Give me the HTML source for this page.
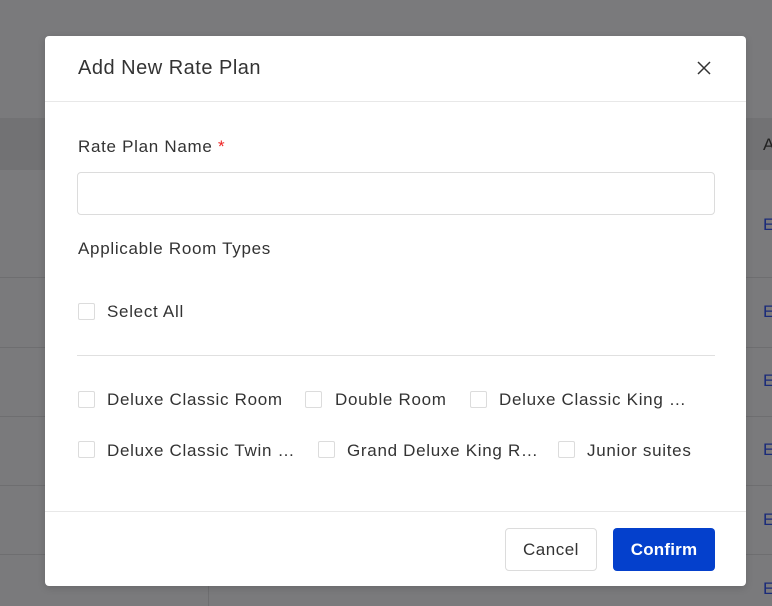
<!DOCTYPE html>
<html><head><meta charset="utf-8"><style>
*{box-sizing:border-box;margin:0;padding:0}
body{width:772px;height:606px;overflow:hidden;background:#7a7a7c;font-family:"Liberation Sans",Arial,sans-serif;position:relative;color:#333}
.band{position:absolute;left:0;right:0;top:118px;height:52px;background:#727274}
.hl{position:absolute;left:0;right:0;height:1px;background:#6e6e70}
.E{position:absolute;left:763px;color:#1a2b7a;font-size:17px}
.modal{position:absolute;left:45px;top:36px;width:701px;height:550px;background:#fff;border-radius:4px;box-shadow:0 2px 8px rgba(0,0,0,.15)}
.t{position:absolute;white-space:nowrap}
.cb{position:absolute;width:17px;height:17px;border:1px solid #dcdcdc;border-radius:2px;background:#fff}
.lbl{position:absolute;font-size:17px;color:#333;white-space:nowrap;line-height:20px;letter-spacing:0.7px}
</style></head><body>
<div class="band"></div>
<div class="hl" style="top:277px"></div><div class="hl" style="top:347px"></div><div class="hl" style="top:416px"></div><div class="hl" style="top:485px"></div><div class="hl" style="top:554px"></div>
<div style="position:absolute;left:208px;top:586px;width:1px;height:20px;background:#6e6e70"></div>
<div class="E" style="top:135px;color:#222">A</div>
<div class="E" style="top:215px">E</div><div class="E" style="top:302px">E</div><div class="E" style="top:371px">E</div><div class="E" style="top:440px">E</div><div class="E" style="top:510px">E</div><div class="E" style="top:579px">E</div>
<div class="modal">
<div class="t" style="left:33px;top:20px;font-size:20px;line-height:24px;color:#333;letter-spacing:0.5px">Add New Rate Plan</div>
<svg style="position:absolute;left:652px;top:25px" width="14" height="14" viewBox="0 0 14 14"><path d="M1 1L13 13M13 1L1 13" stroke="#333" stroke-width="1.5"/></svg>
<div style="position:absolute;left:0;right:0;top:65px;height:1px;background:#e8e8e8"></div>
<div class="lbl" style="left:33px;top:101px">Rate Plan Name <span style="color:#e22">*</span></div>
<div style="position:absolute;left:32px;top:136px;width:638px;height:43px;border:1px solid #dcdcdc;border-radius:4px"></div>
<div class="lbl" style="left:33px;top:203px">Applicable Room Types</div>
<div class="cb" style="left:33px;top:267px"></div><div class="lbl" style="left:62px;top:266px">Select All</div>
<div style="position:absolute;left:32px;top:319px;width:638px;height:1px;background:#e0e0e0"></div>
<div class="cb" style="left:33px;top:355px"></div><div class="lbl" style="left:62px;top:354px">Deluxe Classic Room</div>
<div class="cb" style="left:260px;top:355px"></div><div class="lbl" style="left:290px;top:354px">Double Room</div>
<div class="cb" style="left:425px;top:355px"></div><div class="lbl" style="left:454px;top:354px">Deluxe Classic King …</div>
<div class="cb" style="left:33px;top:405px"></div><div class="lbl" style="left:62px;top:405px">Deluxe Classic Twin …</div>
<div class="cb" style="left:273px;top:405px"></div><div class="lbl" style="left:302px;top:405px">Grand Deluxe King R…</div>
<div class="cb" style="left:513px;top:405px"></div><div class="lbl" style="left:542px;top:405px">Junior suites</div>
<div style="position:absolute;left:0;right:0;top:475px;height:1px;background:#e8e8e8"></div>
<div style="position:absolute;left:460px;top:492px;width:92px;height:43px;border:1px solid #dcdcdc;border-radius:4px;font-size:17px;line-height:41px;text-align:center;color:#333;letter-spacing:0.5px">Cancel</div>
<div style="position:absolute;left:568px;top:492px;width:102px;height:43px;background:#0440cc;border-radius:4px;font-size:17px;line-height:43px;text-align:center;color:#fff;font-weight:bold;letter-spacing:0.2px">Confirm</div>
</div>
</body></html>
